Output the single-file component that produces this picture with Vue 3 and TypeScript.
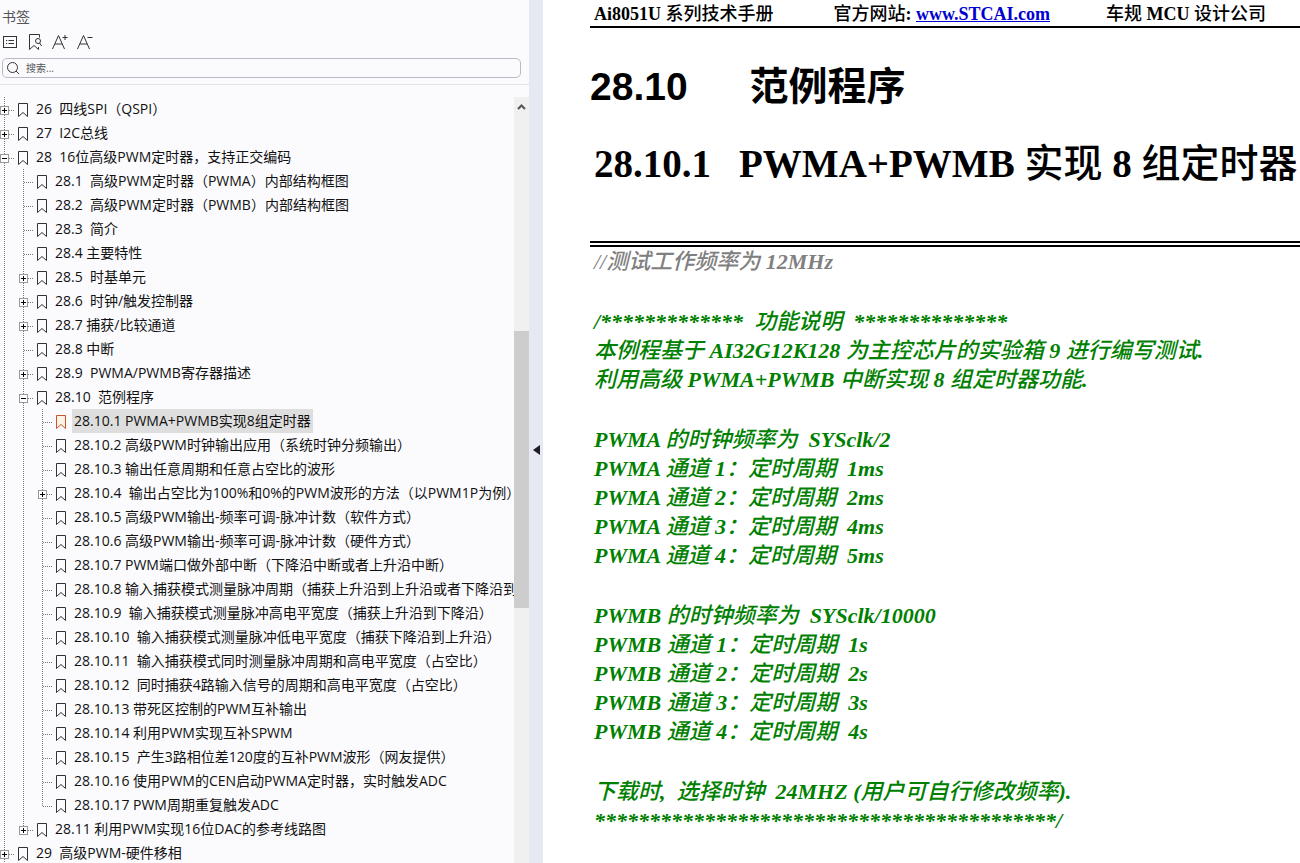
<script setup lang="ts">
import { computed, ref } from 'vue'

interface Bookmark {
  level: number
  title: string
  state?: 'open' | 'closed'
}

interface Row extends Bookmark {
  id: number
  guides: boolean[]
  last: boolean
}

interface Run {
  text: string
  han: boolean
}

const bookmarks: Bookmark[] = [
  { level: 0, title: '26  四线SPI（QSPI）', state: 'closed' },
  { level: 0, title: '27  I2C总线', state: 'closed' },
  { level: 0, title: '28  16位高级PWM定时器，支持正交编码', state: 'open' },
  { level: 1, title: '28.1  高级PWM定时器（PWMA）内部结构框图' },
  { level: 1, title: '28.2  高级PWM定时器（PWMB）内部结构框图' },
  { level: 1, title: '28.3  简介' },
  { level: 1, title: '28.4 主要特性' },
  { level: 1, title: '28.5  时基单元', state: 'closed' },
  { level: 1, title: '28.6  时钟/触发控制器', state: 'closed' },
  { level: 1, title: '28.7 捕获/比较通道', state: 'closed' },
  { level: 1, title: '28.8 中断' },
  { level: 1, title: '28.9  PWMA/PWMB寄存器描述', state: 'closed' },
  { level: 1, title: '28.10  范例程序', state: 'open' },
  { level: 2, title: '28.10.1 PWMA+PWMB实现8组定时器' },
  { level: 2, title: '28.10.2 高级PWM时钟输出应用（系统时钟分频输出）' },
  { level: 2, title: '28.10.3 输出任意周期和任意占空比的波形' },
  { level: 2, title: '28.10.4  输出占空比为100%和0%的PWM波形的方法（以PWM1P为例）', state: 'closed' },
  { level: 2, title: '28.10.5 高级PWM输出-频率可调-脉冲计数（软件方式）' },
  { level: 2, title: '28.10.6 高级PWM输出-频率可调-脉冲计数（硬件方式）' },
  { level: 2, title: '28.10.7 PWM端口做外部中断（下降沿中断或者上升沿中断）' },
  { level: 2, title: '28.10.8 输入捕获模式测量脉冲周期（捕获上升沿到上升沿或者下降沿到' },
  { level: 2, title: '28.10.9  输入捕获模式测量脉冲高电平宽度（捕获上升沿到下降沿）' },
  { level: 2, title: '28.10.10  输入捕获模式测量脉冲低电平宽度（捕获下降沿到上升沿）' },
  { level: 2, title: '28.10.11  输入捕获模式同时测量脉冲周期和高电平宽度（占空比）' },
  { level: 2, title: '28.10.12  同时捕获4路输入信号的周期和高电平宽度（占空比）' },
  { level: 2, title: '28.10.13 带死区控制的PWM互补输出' },
  { level: 2, title: '28.10.14 利用PWM实现互补SPWM' },
  { level: 2, title: '28.10.15  产生3路相位差120度的互补PWM波形（网友提供）' },
  { level: 2, title: '28.10.16 使用PWM的CEN启动PWMA定时器，实时触发ADC' },
  { level: 2, title: '28.10.17 PWM周期重复触发ADC' },
  { level: 1, title: '28.11 利用PWM实现16位DAC的参考线路图', state: 'closed' },
  { level: 0, title: '29  高级PWM-硬件移相', state: 'closed' },
]

// True when another entry of the given level follows before its branch closes.
function continues(index: number, level: number): boolean {
  for (let i = index + 1; i < bookmarks.length; i++) {
    if (bookmarks[i].level < level) return false
    if (bookmarks[i].level === level) return true
  }
  return level === 0
}

const rows = computed<Row[]>(() =>
  bookmarks.map((b, id) => ({
    ...b,
    id,
    guides: Array.from({ length: b.level }, (_, l) => continues(id, l)),
    last: !continues(id, b.level),
  })),
)

const selected = ref(13)
const query = ref('')
const thumb = { top: '30.5%', height: '36.2%' }

const comments: string[][] = [
  [
    '/*************  功能说明  **************',
    '本例程基于 AI32G12K128 为主控芯片的实验箱 9 进行编写测试.',
    '利用高级 PWMA+PWMB 中断实现 8 组定时器功能.',
  ],
  [
    'PWMA 的时钟频率为  SYSclk/2',
    'PWMA 通道 1：定时周期  1ms',
    'PWMA 通道 2：定时周期  2ms',
    'PWMA 通道 3：定时周期  4ms',
    'PWMA 通道 4：定时周期  5ms',
  ],
  [
    'PWMB 的时钟频率为  SYSclk/10000',
    'PWMB 通道 1：定时周期  1s',
    'PWMB 通道 2：定时周期  2s',
    'PWMB 通道 3：定时周期  3s',
    'PWMB 通道 4：定时周期  4s',
  ],
  ['下载时,  选择时钟  24MHZ (用户可自行修改频率).', '*'.repeat(42) + '/'],
]

function runs(text: string): Run[] {
  return (text.match(/[\u3000-\u9fff\uff00-\uffef]+|[^\u3000-\u9fff\uff00-\uffef]+/g) ?? []).map((t) => ({
    text: t,
    han: /[\u3000-\uffef]/.test(t),
  }))
}
</script>

<template>
  <div class="viewer">
    <aside class="panel">
      <h2 class="panel-title">书签</h2>
      <div class="tools">
        <button type="button" aria-label="选项">
          <svg width="16" height="16" viewBox="0 0 16 16">
            <rect x="1.5" y="2.5" width="13" height="11" />
            <path d="M4 6.5h1.2M6.5 6.5H12M4 9.5h1.2M6.5 9.5H12" />
          </svg>
        </button>
        <button type="button" aria-label="查找书签">
          <svg width="16" height="16" viewBox="0 0 16 16">
            <path d="M12.5 3.5V.5h-10v15l4.500-4 4.500 4v-2.500" />
            <circle cx="11" cy="7" r="2.500" />
            <path d="M12.600 9l2 3" />
          </svg>
        </button>
        <button type="button" aria-label="增大字号">
          <svg width="16" height="16" viewBox="0 0 16 16">
            <path d="M.5 15L6.500 1.500 12.500 15M3 10h7M10.500 3.500h5M13 1v5" />
          </svg>
        </button>
        <button type="button" aria-label="减小字号">
          <svg width="16" height="16" viewBox="0 0 16 16">
            <path d="M.5 15L6.500 1.500 12.500 15M3 10h7M10.500 3.500h5" />
          </svg>
        </button>
      </div>
      <label class="search">
        <svg width="14" height="14" viewBox="0 0 14 14">
          <circle cx="6.500" cy="6.500" r="5" />
          <path d="M10 10l3 3" />
        </svg>
        <input v-model="query" type="text" placeholder="搜索..." aria-label="搜索" />
      </label>
      <div class="outline">
        <ul class="tree">
          <li v-for="row in rows" :key="row.id" class="row">
            <span v-for="(on, l) in row.guides" :key="l" class="guide" :class="{ on }"></span>
            <span class="joint" :class="{ last: row.last }">
              <button
                v-if="row.state"
                type="button"
                class="toggle"
                :aria-label="row.state === 'open' ? '折叠' : '展开'"
              >
                <svg width="9" height="9" viewBox="0 0 9 9">
                  <rect x=".5" y=".5" width="8" height="8" />
                  <path :d="row.state === 'open' ? 'M2 4.5h5' : 'M2 4.5h5M4.5 2v5'" />
                </svg>
              </button>
              <span v-else class="stub"></span>
            </span>
            <svg class="mark" :class="{ active: row.id === selected }" width="12" height="16" viewBox="0 0 12 16">
              <path d="M1.500 1.500h9v13L6 10.500l-4.500 4z" />
            </svg>
            <a
              href="#"
              class="label"
              :class="{ selected: row.id === selected }"
              @click.prevent="selected = row.id"
              >{{ row.title }}</a
            >
          </li>
        </ul>
        <div class="scrollbar">
          <svg class="up" width="15" height="20" viewBox="0 0 15 20">
            <path d="M4 12l3.500-3.500L11 12" />
          </svg>
          <div class="thumb" :style="thumb"></div>
        </div>
      </div>
    </aside>
    <button type="button" class="splitter" aria-label="收起侧栏">
      <svg width="7" height="10" viewBox="0 0 7 10"><path d="M7 0v10L0 5z" /></svg>
    </button>
    <main class="page">
      <header class="running">
        <span>Ai8051U <span class="han">系列技术手册</span></span>
        <span class="site"><span class="han">官方网站</span>: <a href="#">www.STCAI.com</a></span>
        <span class="firm"><span class="han">车规</span> MCU <span class="han">设计公司</span></span>
      </header>
      <h1><span class="num">28.10</span><span>范例程序</span></h1>
      <h2 class="section">
        <span class="num">28.10.1</span>
        <span>PWMA+PWMB <span class="han">实现</span> 8 <span class="han">组定时器</span></span>
      </h2>
      <div class="code">
        <p class="note"><span class="han">//测试工作频率为</span> 12MHz</p>
        <div v-for="(block, b) in comments" :key="b" class="block">
          <p v-for="(line, i) in block" :key="i">
            <span v-for="(run, r) in runs(line)" :key="r" :class="{ han: run.han }">{{ run.text }}</span>
          </p>
        </div>
      </div>
    </main>
  </div>
</template>

<style>
body {
  margin: 0;
}
</style>

<style scoped>
.viewer {
  display: flex;
  height: 100vh;
  overflow: hidden;
  background: #fff;
}
button {
  padding: 0;
  border: 0;
  background: none;
}
svg {
  display: block;
  flex: none;
  fill: none;
}
.panel {
  display: flex;
  flex-direction: column;
  flex: 0 0 529px;
  min-width: 0;
  background: #fbfbfe;
  font-family: 'Open Sans', 'Noto Sans CJK SC', sans-serif;
  font-size: 14px;
  color: #111;
}
.panel-title {
  margin: 6px 0 0 2px;
  font-size: 14px;
  line-height: 22px;
  font-weight: 400;
  color: #555;
}
.tools {
  display: flex;
  gap: 9px;
  margin: 6px 2px 8px;
}
.tools svg {
  stroke: #333;
}
.search {
  display: flex;
  align-items: center;
  gap: 6px;
  box-sizing: border-box;
  height: 20px;
  margin: 0 8px 0 2px;
  padding-left: 3px;
  border: 1px solid #b8bac8;
  border-radius: 5px;
}
.search svg {
  stroke: #333;
}
.search input {
  flex: 1;
  min-width: 0;
  padding: 0;
  border: 0;
  outline: 0;
  background: none;
  font: inherit;
  font-size: 10px;
  line-height: 16px;
}
.search input::placeholder {
  color: #555;
}
.outline {
  display: flex;
  flex: 1;
  min-height: 0;
  margin-top: 6px;
  padding-top: 12px;
  border-top: 1px solid #e2e2ea;
}
.tree {
  flex: 1;
  min-width: 0;
  margin: 0;
  padding: 0;
  overflow: hidden;
  list-style: none;
}
.row {
  display: flex;
  height: 24px;
}
.guide,
.joint {
  flex: none;
  width: 19px;
  background: repeating-linear-gradient(#777 0 1px, transparent 1px 2px) 4px 0 / 1px 100% no-repeat;
}
.guide:not(.on) {
  background: none;
}
.joint {
  display: flex;
  align-items: center;
  width: 17px;
  padding-top: 2px;
  box-sizing: border-box;
}
.joint.last {
  background-size: 1px 13px;
}
.joint::after {
  content: '';
  flex: 1;
  height: 1px;
  margin-right: 2px;
  background: repeating-linear-gradient(90deg, #777 0 1px, transparent 1px 2px);
}
.stub {
  width: 5px;
}
.toggle rect {
  fill: #fff;
  stroke: #999;
}
.toggle path {
  stroke: #000;
}
.mark {
  align-self: center;
  margin-top: 2px;
  stroke: #333;
}
.mark.active {
  stroke: #c8562a;
  fill: #fff3e6;
}
.label {
  margin-left: 5px;
  padding: 0 2px;
  line-height: 24px;
  white-space: pre;
  color: inherit;
  text-decoration: none;
}
.label.selected {
  background: #dedede;
}
.scrollbar {
  position: relative;
  flex: 0 0 15px;
  background: #f0f0f0;
}
.up {
  stroke: #555;
  stroke-width: 2;
}
.thumb {
  position: absolute;
  left: 0;
  right: 0;
  background: #cdcdcd;
}
.splitter {
  display: flex;
  align-items: center;
  justify-content: center;
  flex: 0 0 14px;
  padding-top: 36px;
  background: #e6e8f2;
}
.splitter path {
  fill: #1c1c24;
}
.page {
  flex: 1;
  min-width: 0;
  padding-left: 47px;
  overflow: hidden;
  font-family: 'Liberation Serif', 'Noto Sans CJK SC', serif;
  font-weight: 700;
  color: #000;
  white-space: nowrap;
}
.han {
  font-weight: 500;
}
.running {
  display: flex;
  height: 26px;
  padding-left: 4px;
  border-bottom: 2px solid #000;
  font-size: 18px;
  line-height: 28px;
}
.running a {
  color: #0000d0;
}
.site {
  margin-left: 60px;
}
.firm {
  margin-left: 56px;
}
h1 {
  display: flex;
  gap: 62px;
  margin: 31px 0 0;
  font-family: 'Liberation Sans', 'Noto Sans CJK SC', sans-serif;
  font-size: 39px;
  line-height: 56px;
}
.section {
  display: flex;
  gap: 28px;
  margin: 21px 0 0;
  padding: 0 0 49px 4px;
  border-bottom: 6px double #000;
  font-size: 39px;
  line-height: 56px;
}
.code {
  display: flex;
  flex-direction: column;
  gap: 31px;
  padding-left: 4px;
  font-size: 22px;
  font-style: italic;
  line-height: 29px;
  color: #008000;
  white-space: pre;
}
.code p {
  height: 29px;
  margin: 0;
}
.note {
  color: #808080;
}
</style>
